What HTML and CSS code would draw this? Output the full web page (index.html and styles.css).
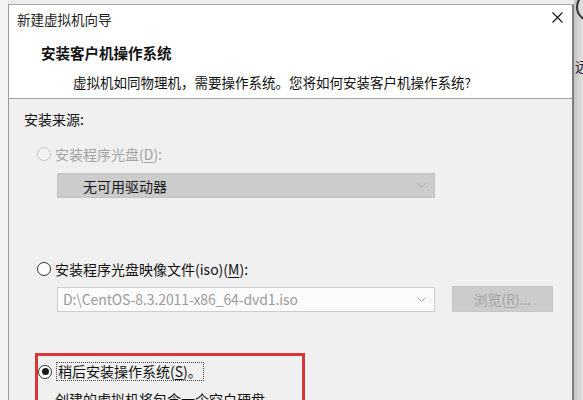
FILE: index.html
```html
<!DOCTYPE html>
<html lang="zh-CN">
<head>
<meta charset="utf-8">
<title>新建虚拟机向导</title>
<link rel="stylesheet" href="styles.css">
</head>
<body>
<div class="screen">
  <div class="gutter-left"></div>
  <div class="dialog">
    <div class="header">
      <div class="titlebar">
        <span class="title">新建虚拟机向导</span>
        <svg class="close" width="11" height="11" viewBox="0 0 11 11"><path d="M0.5 0.5 L10.5 10.5 M10.5 0.5 L0.5 10.5" stroke="#111" stroke-width="1.1" fill="none"/></svg>
      </div>
      <div class="heading">安装客户机操作系统</div>
      <div class="subtitle">虚拟机如同物理机，需要操作系统。您将如何安装客户机操作系统?</div>
    </div>
    <div class="body">
      <div class="section-label">安装来源:</div>

      <div class="radio-row disabled first">
        <span class="radio"></span>
        <span class="label">安装程序光盘(<u>D</u>):</span>
      </div>
      <div class="combo disabled-combo">
        <span class="combo-text">无可用驱动器</span>
        <svg class="chev" width="9" height="5" viewBox="0 0 9 5"><path d="M0.5 0.5 L4.5 4.5 L8.5 0.5" stroke="#a8a8a8" stroke-width="1" fill="none"/></svg>
      </div>

      <div class="radio-row second">
        <span class="radio"></span>
        <span class="label">安装程序光盘映像文件(iso)(<u>M</u>):</span>
      </div>
      <div class="iso-row">
        <div class="combo iso-combo">
          <span class="combo-text path">D:\CentOS-8.3.2011-x86_64-dvd1.iso</span>
          <svg class="chev" width="9" height="5" viewBox="0 0 9 5"><path d="M0.5 0.5 L4.5 4.5 L8.5 0.5" stroke="#a8a8a8" stroke-width="1" fill="none"/></svg>
        </div>
        <div class="browse">浏览(<u>R</u>)...</div>
      </div>

      <div class="highlight">
        <div class="radio-row third">
          <span class="radio checked"></span>
          <span class="label focus">稍后安装操作系统(<u>S</u>)。</span>
        </div>
        <div class="desc">创建的虚拟机将包含一个空白硬盘。</div>
      </div>
    </div>
  </div>
  <div class="gutter-right">
    <span class="ring"></span>
    <span class="peek">远</span>
  </div>
</div>
</body>
</html>
```

FILE: styles.css
```css
* { box-sizing: border-box; }
html, body {
  margin: 0;
  padding: 0;
  width: 583px;
  height: 400px;
  overflow: hidden;
  background: #ececec;
  font-family: "Noto Sans CJK SC", "Noto Sans", sans-serif;
  color: #111;
}
u { text-decoration: underline; text-underline-offset: 2px; }

.screen {
  display: flex;
  width: 583px;
  height: 400px;
  overflow: hidden;
}
.gutter-left {
  width: 8px;
  flex: none;
  background: #f4f4f4;
}
.dialog {
  width: 566px;
  flex: none;
  margin-top: 4px;
  border-top: 1px solid #a8a8a8;
  border-left: 1px solid #9a9a9a;
  border-right: 2px solid #7c7c7c;
  background: #f0f0f0;
  height: 420px;
}
.gutter-right {
  flex: 1;
  position: relative;
  overflow: hidden;
  background: linear-gradient(to right, #c4c4c4, #e2e2e2);
}
.ring {
  position: absolute;
  left: 2px;
  top: -8px;
  width: 30px;
  height: 30px;
  border: 2px solid #333;
  border-radius: 50%;
}
.peek {
  position: absolute;
  left: 1px;
  top: 57px;
  font-size: 14px;
  line-height: 18px;
  color: #222;
}

/* header */
.header {
  background: #fff;
  height: 94px;
  border-bottom: 1px solid #a4a4a4;
}
.titlebar {
  height: 28px;
  display: flex;
  align-items: center;
  justify-content: space-between;
  padding: 0 9px 0 8px;
}
.title {
  font-size: 13.5px;
  line-height: 20px;
  color: #222;
}
.close { display: block; margin-top: -3px; }
.heading {
  margin-top: 10px;
  padding-left: 32px;
  font-size: 14.5px;
  font-weight: bold;
  line-height: 20px;
  color: #111;
}
.subtitle {
  margin-top: 9px;
  padding-left: 64px;
  font-size: 13.5px;
  line-height: 20px;
  color: #111;
}

/* body */
.body {
  padding: 10px 0 0 15px;
}
.section-label {
  font-size: 14px;
  line-height: 20px;
  color: #111;
}
.radio-row {
  display: flex;
  align-items: center;
  height: 20px;
  font-size: 14px;
  line-height: 20px;
}
.radio-row.first { margin-top: 15px; padding-left: 13px; }
.radio-row.second { margin-top: 61px; padding-left: 13px; }
.radio-row.third { margin-top: 6px; padding-left: 0; height: 19px; }
.radio {
  width: 14px;
  height: 14px;
  border: 1px solid #333;
  border-radius: 50%;
  background: #fff;
  flex: none;
  margin-right: 4px;
  display: flex;
  align-items: center;
  justify-content: center;
}
.radio-row.disabled .radio {
  border-color: #c4c4c4;
  background: #f4f4f4;
}
.radio-row.disabled .label { color: #a2a2a2; }
.radio.checked::after {
  content: "";
  width: 7px;
  height: 7px;
  border-radius: 50%;
  background: #1a1a1a;
}
.label { white-space: nowrap; }
.label.focus {
  outline: 1px dotted #444;
  outline-offset: 0;
  padding: 0 1px;
  margin-left: 1px;
  line-height: 17px;
}

.combo {
  width: 378px;
  height: 25px;
  display: flex;
  align-items: center;
  justify-content: space-between;
  padding: 0 8px 0 25px;
  font-size: 14px;
}
.disabled-combo {
  margin: 9px 0 0 33px;
  background: #cccccc;
  border: 1px solid #c2c2c2;
}
.disabled-combo .combo-text { color: #1a1a1a; }

.iso-row {
  display: flex;
  align-items: center;
  margin: 7px 0 0 33px;
  gap: 17px;
}
.iso-combo {
  margin: 0;
  background: #fbfbfb;
  border: 1px solid #cdcdcd;
  padding: 0 8px 0 5px;
}
.path {
  color: #9c9c9c;
  font-size: 14px;
  letter-spacing: -0.1px;
}
.chev { display: block; }
.browse {
  width: 101px;
  height: 26px;
  background: #cccccc;
  border: 1px solid #c6c6c6;
  color: #a3a3a3;
  font-size: 14px;
  line-height: 24px;
  text-align: center;
}

.highlight {
  margin: 41px 0 0 11px;
  width: 270px;
  height: 80px;
  border: 3px solid #d9363a;
  border-bottom: none;
}
.desc {
  margin-top: 8px;
  padding-left: 17px;
  font-size: 14px;
  line-height: 20px;
  color: #111;
}
```
